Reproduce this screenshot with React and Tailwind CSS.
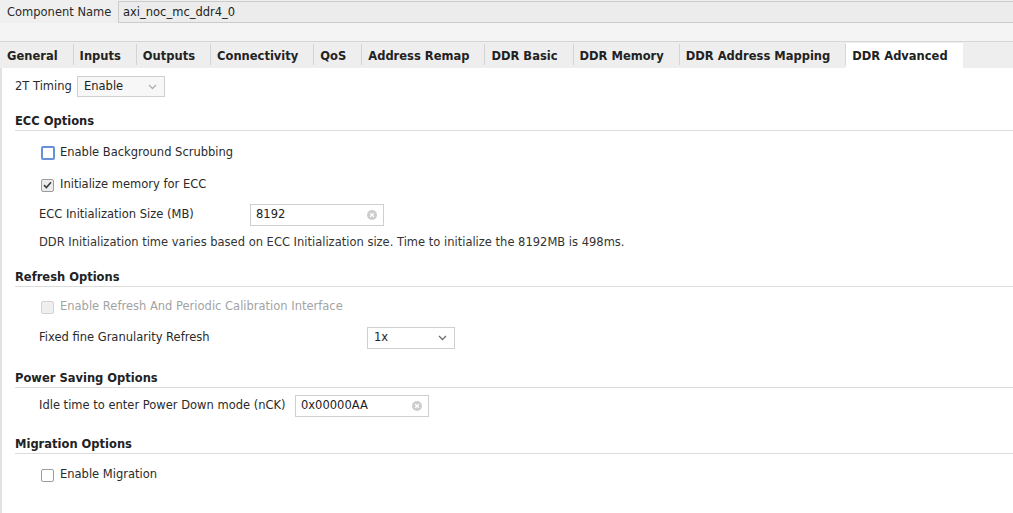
import React from "react";

const tabs = [
  "General",
  "Inputs",
  "Outputs",
  "Connectivity",
  "QoS",
  "Address Remap",
  "DDR Basic",
  "DDR Memory",
  "DDR Address Mapping",
  "DDR Advanced",
];

function Chevron({ color = "#9a9a9a" }) {
  return (
    <svg width="9" height="6" viewBox="0 0 9 6" fill="none">
      <polyline points="1,1 4.5,4.5 8,1" stroke={color} strokeWidth="1.3" />
    </svg>
  );
}

function ClearIcon() {
  return (
    <svg width="10" height="10" viewBox="0 0 10 10">
      <circle cx="5" cy="5" r="5" fill="#cdcdcd" />
      <path d="M3.2 3.2 L6.8 6.8 M6.8 3.2 L3.2 6.8" stroke="#fff" strokeWidth="1.3" />
    </svg>
  );
}

function Checkbox({ state }) {
  if (state === "focus") {
    return (
      <span className="w-[14px] h-[14px] rounded-[2px] border-2 border-[#6690d8] bg-white shrink-0" />
    );
  }
  if (state === "checked") {
    return (
      <span className="w-[13px] h-[13px] rounded-[2px] border border-[#9c9c9c] bg-[#ececec] shrink-0 flex items-center justify-center">
        <svg width="9" height="8" viewBox="0 0 9 8" fill="none">
          <path d="M1 4.2 L3.4 6.5 L8 1.2" stroke="#3e3e3e" strokeWidth="1.6" />
        </svg>
      </span>
    );
  }
  if (state === "disabled") {
    return (
      <span className="w-[13px] h-[13px] rounded-[2px] border border-[#d2d2d2] bg-[#efefef] shrink-0" />
    );
  }
  return (
    <span className="w-[13px] h-[13px] rounded-[2px] border border-[#9c9c9c] bg-white shrink-0" />
  );
}

function Heading({ children, className = "" }) {
  return (
    <div
      className={
        "h-[18px] leading-[17px] border-b border-[#dcdcdc] font-bold text-[11.5px] text-[#222] " +
        className
      }
    >
      {children}
    </div>
  );
}

function ClearInput({ value, className = "" }) {
  return (
    <div
      className={
        "h-[22px] border border-[#cfcfcf] bg-white flex items-center pl-[5px] pr-[6px] justify-between " +
        className
      }
    >
      <span className="text-[#222]">{value}</span>
      <ClearIcon />
    </div>
  );
}

export default function App() {
  return (
    <div
      className="w-[1013px] h-[513px] overflow-hidden bg-white text-[11.5px] text-[#2a2a2a] flex flex-col"
      style={{ fontFamily: '"DejaVu Sans", sans-serif' }}
    >
      {/* Component name bar */}
      <div className="h-[23px] bg-[#efefef] flex items-center pt-[1px]">
        <span className="pl-[7px] pt-[2px] w-[118px] text-[#2a2a2a]">Component Name</span>
        <div className="flex-1 h-[22px] border border-[#cbcbcb] border-r-0 bg-[#ececec] flex items-center pl-[4px] pt-[1px] text-[#222]">
          axi_noc_mc_ddr4_0
        </div>
      </div>
      <div className="h-[19px] bg-[#f4f4f4] border-b border-[#d6d6d6]" />

      {/* Tabs */}
      <div className="h-[26px] bg-[#eeeeee] flex items-end pl-[1px]">
        {tabs.map((t, i) => {
          const active = t === "DDR Advanced";
          return (
            <div key={t} className="flex items-center h-[25px]">
              <div
                className={
                  "h-[25px] flex items-center pt-[2px] pl-[6px] pr-[15px] font-bold text-[11.5px] text-[#222] " +
                  (active ? "bg-white" : "")
                }
              >
                {t}
              </div>
              {i < tabs.length - 1 && (
                <div className="w-px h-[21px] bg-[#d4d4d4] mb-[2px]" />
              )}
            </div>
          );
        })}
      </div>

      {/* Content */}
      <div className="flex-1 border-l-2 border-[#e2e2e2] pl-[13px] pt-[8px] flex flex-col">
        {/* 2T Timing */}
        <div className="flex items-center h-[21px]">
          <span className="w-[62px]">2T Timing</span>
          <div className="w-[88px] h-[21px] border border-[#cfcfcf] bg-[#f7f7f7] flex items-center justify-between pl-[6px] pr-[7px]">
            <span className="text-[#222]">Enable</span>
            <Chevron color="#b0b0b0" />
          </div>
        </div>

        {/* ECC Options */}
        <Heading className="mt-[16px]">ECC Options</Heading>
        <div className="pl-[26px] flex items-center gap-[5px] h-[20px] mt-[12px]">
          <Checkbox state="focus" />
          <span>Enable Background Scrubbing</span>
        </div>
        <div className="pl-[26px] flex items-center gap-[6px] h-[20px] mt-[12px]">
          <Checkbox state="checked" />
          <span>Initialize memory for ECC</span>
        </div>
        <div className="pl-[24px] flex items-center h-[22px] mt-[9px]">
          <span className="w-[211px]">ECC Initialization Size (MB)</span>
          <ClearInput value="8192" className="w-[134px]" />
        </div>
        <div className="pl-[24px] h-[16px] leading-[16px] mt-[8px] text-[#333]">
          DDR Initialization time varies based on ECC Initialization size. Time to initialize the 8192MB is 498ms.
        </div>

        {/* Refresh Options */}
        <Heading className="mt-[19px]">Refresh Options</Heading>
        <div className="pl-[26px] flex items-center gap-[6px] h-[20px] mt-[10px]">
          <Checkbox state="disabled" />
          <span className="text-[#a3a3a3]">Enable Refresh And Periodic Calibration Interface</span>
        </div>
        <div className="pl-[24px] flex items-center h-[22px] mt-[10px]">
          <span className="w-[328px]">Fixed fine Granularity Refresh</span>
          <div className="w-[88px] h-[22px] border border-[#cfcfcf] bg-white flex items-center justify-between pl-[6px] pr-[7px]">
            <span className="text-[#222]">1x</span>
            <Chevron color="#707070" />
          </div>
        </div>

        {/* Power Saving Options */}
        <Heading className="mt-[21px]">Power Saving Options</Heading>
        <div className="pl-[24px] flex items-center h-[22px] mt-[7px]">
          <span className="w-[256px]">Idle time to enter Power Down mode (nCK)</span>
          <ClearInput value="0x00000AA" className="w-[134px]" />
        </div>

        {/* Migration Options */}
        <Heading className="mt-[19px]">Migration Options</Heading>
        <div className="pl-[26px] flex items-center gap-[6px] h-[20px] mt-[11px]">
          <Checkbox state="unchecked" />
          <span>Enable Migration</span>
        </div>
      </div>
    </div>
  );
}
